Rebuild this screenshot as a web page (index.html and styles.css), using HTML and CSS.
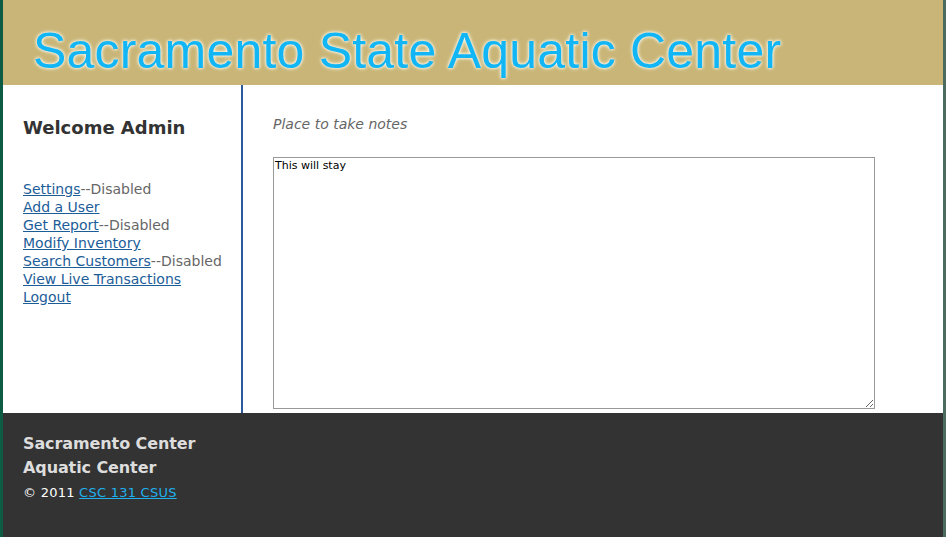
FILE: index.html
```html
<!DOCTYPE html>
<html>
<head>
<meta charset="utf-8">
<link rel="stylesheet" href="styles.css">
</head>
<body>
<div class="page">
  <header class="header">
    <h1 class="title">Sacramento State Aquatic Center</h1>
  </header>
  <div class="body">
    <aside class="sidebar">
      <h2 class="welcome">Welcome Admin</h2>
      <ul class="nav">
        <li><a href="#">Settings</a><span class="dis">--Disabled</span></li>
        <li><a href="#">Add a User</a></li>
        <li><a href="#">Get Report</a><span class="dis">--Disabled</span></li>
        <li><a href="#">Modify Inventory</a></li>
        <li><a href="#">Search Customers</a><span class="dis">--Disabled</span></li>
        <li><a href="#">View Live Transactions</a></li>
        <li><a href="#">Logout</a></li>
      </ul>
    </aside>
    <main class="main">
      <p class="hint">Place to take notes</p>
      <textarea class="notes">This will stay</textarea>
    </main>
  </div>
  <footer class="footer">
    <div class="fname">Sacramento Center</div>
    <div class="fname">Aquatic Center</div>
    <div class="copy">© 2011 <a href="#">CSC 131 CSUS</a></div>
  </footer>
</div>
</body>
</html>
```
FILE: styles.css
```css
html, body {
  margin: 0;
  padding: 0;
  height: 100%;
}
body {
  background: linear-gradient(to right, #0d5b45 0, #0d5b45 50%, #4a6b5e 50%, #4a6b5e 100%);
  font-family: "DejaVu Sans", Verdana, sans-serif;
  overflow: hidden;
}
.page {
  margin: 0 3px;
  height: 537px;
  background: #fff;
  display: flex;
  flex-direction: column;
}
.header {
  background: #c9b577;
  height: 85px;
  box-sizing: border-box;
  padding: 22px 0 0 30px;
}
.title {
  margin: 0;
  font-family: "Liberation Sans", Arial, sans-serif;
  font-weight: normal;
  font-size: 50px;
  letter-spacing: 0.2px;
  line-height: 58px;
  color: #12b6f4;
  text-shadow: 0 0 3px #fff, 0 0 4px #fff8e0;
}
.body {
  display: flex;
  height: 328px;
}
.sidebar {
  width: 240px;
  border-right: 2px solid #2b5b9b;
  box-sizing: border-box;
  padding: 31px 0 0 20px;
}
.welcome {
  margin: 0;
  font-size: 18px;
  font-weight: bold;
  color: #333;
  line-height: 24px;
}
.nav {
  list-style: none;
  margin: 40px 0 0;
  padding: 0;
  font-size: 14px;
  line-height: 18px;
}
.nav a {
  color: #1c5d98;
}
.dis {
  color: #666;
}
.main {
  padding: 0 0 0 30px;
}
.hint {
  margin: 29px 0 0;
  font-style: italic;
  font-size: 14px;
  line-height: 20px;
  color: #666;
}
.notes {
  display: block;
  margin-top: 23px;
  width: 602px;
  height: 252px;
  box-sizing: border-box;
  border: 1px solid #999;
  padding: 1px;
  font-family: "DejaVu Sans", Verdana, sans-serif;
  font-size: 11px;
  color: #000;
  resize: both;
}
.footer {
  flex: 1;
  background: #333;
  padding: 19px 0 0 20px;
  color: #ddd;
}
.fname {
  font-weight: bold;
  font-size: 16px;
  letter-spacing: -0.1px;
  line-height: 24px;
}
.copy {
  margin-top: 5px;
  font-size: 13px;
  letter-spacing: 0.25px;
  color: #fff;
}
.copy a {
  color: #1fb0ee;
}
```
